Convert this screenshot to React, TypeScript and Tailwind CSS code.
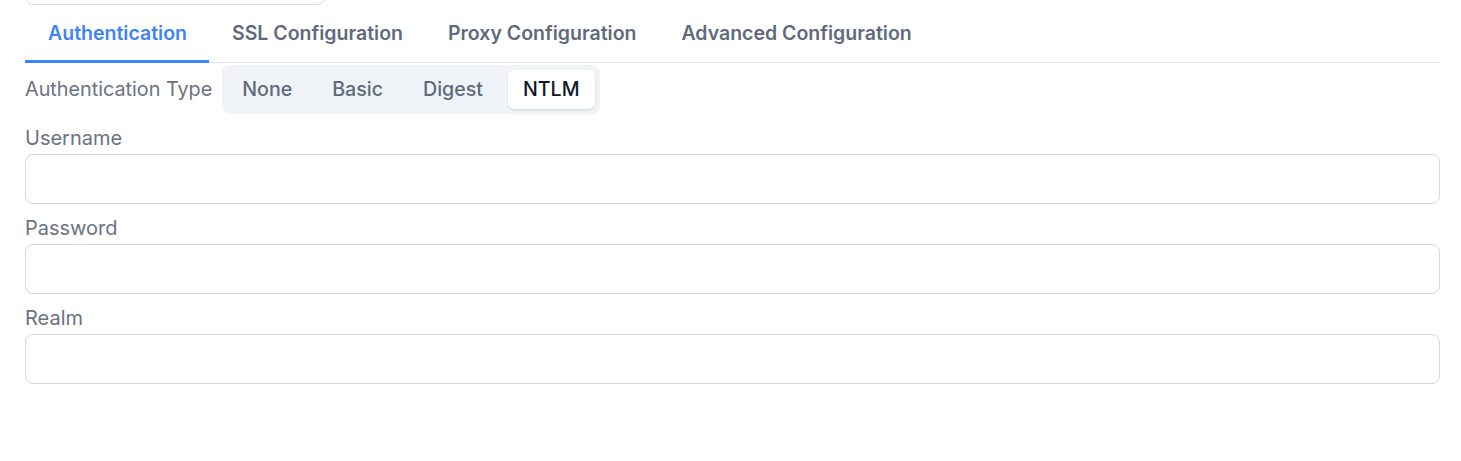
import React, { useState } from "react";

const tabs = ["Authentication", "SSL Configuration", "Proxy Configuration", "Advanced Configuration"];
const authTypes = ["None", "Basic", "Digest", "NTLM"];

function Field({ label }: { label: string }) {
  return (
    <div className="flex flex-col">
      <label className="text-[20px] leading-6 text-[#6b7280] mb-[4px]">{label}</label>
      <input
        type="text"
        className="h-[50px] w-full rounded-lg border border-[#cfd8e3] bg-white px-3 text-[16px] outline-none"
      />
    </div>
  );
}

export default function App() {
  const [activeTab, setActiveTab] = useState(0);
  const [authType, setAuthType] = useState("NTLM");

  return (
    <div className="min-h-screen bg-white pl-[25px] pr-[21px] font-['Inter','Noto_Sans',sans-serif]">
      {/* bottom of the box above, scrolled out of view */}
      <div className="-mt-[36px] h-[41px] w-[300px] rounded-lg border border-[#d5dce6]"></div>

      <div className="flex border-b border-[#e5e9f0]">
        {tabs.map((tab, index) => (
          <button
            key={tab}
            onClick={() => setActiveTab(index)}
            className={`-mb-px h-[58px] pt-[3px] pl-[23px] pr-[22px] text-[19.5px] font-semibold border-b-[3px] ${
              index === activeTab
                ? "text-[#3f83f8] border-[#3f83f8]"
                : "text-[#5f6b7d] border-transparent"
            }`}
          >
            {tab}
          </button>
        ))}
      </div>

      <div className="flex items-center gap-[10px] mt-[2px]">
        <span className="text-[19.8px] text-[#6b7280]">Authentication Type</span>
        <div className="flex items-center gap-[10px] rounded-lg bg-[#f0f3f8] p-[5px]">
          {authTypes.map((type) => (
            <button
              key={type}
              onClick={() => setAuthType(type)}
              className={`h-[39px] pt-px rounded-md px-[15px] text-[19.6px] font-medium ${
                type === authType ? "bg-white text-[#0f172a] shadow-sm" : "text-[#5f6b7d]"
              }`}
            >
              {type}
            </button>
          ))}
        </div>
      </div>

      <div className="mt-[12px] flex flex-col gap-[12px]">
        <Field label="Username" />
        <Field label="Password" />
        <Field label="Realm" />
      </div>
    </div>
  );
}
